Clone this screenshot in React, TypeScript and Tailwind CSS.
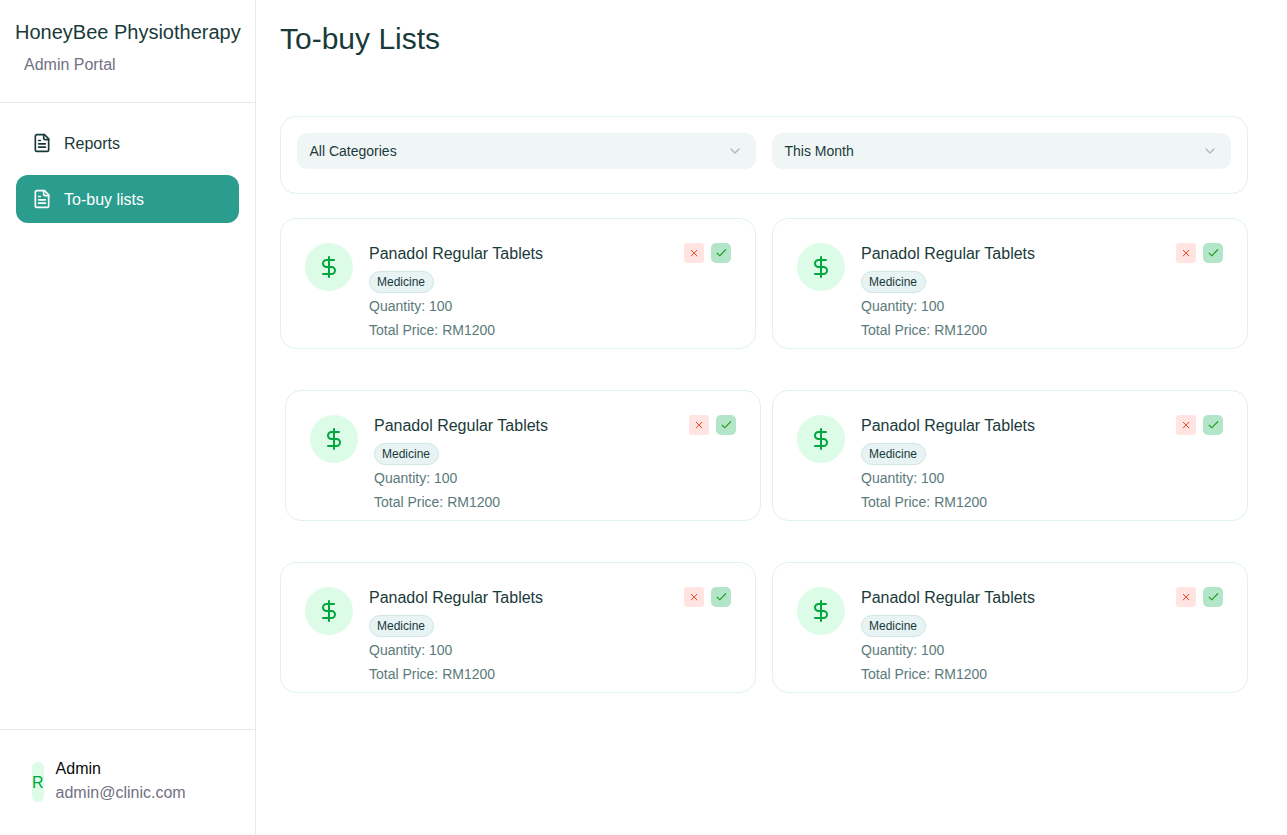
import React from "react";
import { ChevronDown, DollarSign } from "lucide-react";

function DocumentIcon() {
  return (
    <svg
      viewBox="0 0 24 24"
      className="size-5 shrink-0"
      fill="none"
      stroke="currentColor"
      strokeWidth="2"
      strokeLinecap="round"
      strokeLinejoin="round"
    >
      <path d="M15 2H6a2 2 0 0 0-2 2v16a2 2 0 0 0 2 2h12a2 2 0 0 0 2-2V7Z" />
      <path d="M14 2v4a2 2 0 0 0 2 2h4" />
      <path d="M10 9H8M16 13H8M16 17H8" />
    </svg>
  );
}

function NavItem({ label, active = false }: { label: string; active?: boolean }) {
  return (
    <a
      className={
        active
          ? "flex h-12 items-center gap-3 rounded-xl bg-[#2a9d8f] px-4 text-white"
          : "flex h-12 items-center gap-3 rounded-xl px-4 text-[#1a3a3a]"
      }
    >
      <DocumentIcon />
      <span className="pt-0.5">{label}</span>
    </a>
  );
}

function Sidebar() {
  return (
    <aside className="flex w-64 shrink-0 flex-col border-r border-[#e8e9eb]">
      <header className="h-[103px] border-b border-[#e8e9eb] pt-[18px]">
        <h1 className="pl-[15px] text-xl leading-7 whitespace-nowrap text-[#1a3a3a]">HoneyBee Physiotherapy</h1>
        <p className="mt-[7px] pl-6 leading-6 text-[#717182]">Admin Portal</p>
      </header>
      <nav className="flex flex-1 flex-col gap-2 p-4">
        <NavItem label="Reports" />
        <NavItem label="To-buy lists" active />
      </nav>
      <footer className="flex h-[106px] items-start gap-3 border-t border-[#e8e9eb] pt-[27px] pl-8">
        <div className="mt-[5px] flex h-10 items-center rounded-full bg-[#dcfce7] pt-0.5 text-[#00a63e]">R</div>
        <div className="leading-6">
          <p className="text-[#0a0a0a]">Admin</p>
          <p className="text-[#717182]">admin@clinic.com</p>
        </div>
      </footer>
    </aside>
  );
}

function Select({ value }: { value: string }) {
  return (
    <button className="flex h-9 flex-1 items-center justify-between rounded-[10px] bg-[#f0f6f6] pr-[13px] pl-[12.5px] text-sm text-[#1a3a3a]">
      <span className="pb-px">{value}</span>
      <ChevronDown className="size-4 text-[#a9bcbb]" strokeWidth={2} />
    </button>
  );
}

function ItemCard({ shifted = false }: { shifted?: boolean }) {
  return (
    <article
      className={
        shifted
          ? "ml-[5px] -mr-[5px] flex h-[131px] rounded-2xl border border-[#e0f2ef] pt-6 pr-6 pl-6"
          : "flex h-[131px] rounded-2xl border border-[#e0f2ef] pt-6 pr-6 pl-6"
      }
    >
      <div className="flex size-12 items-center justify-center rounded-full bg-[#dcfce7]">
        <DollarSign className="size-6 text-[#00a63e]" strokeWidth={2} />
      </div>
      <div className="-mt-px ml-4 flex flex-1 flex-col items-start">
        <h2 className="leading-6 text-[#1a3a3a]">Panadol Regular Tablets</h2>
        <span className="mt-[5px] flex h-[22px] w-[65px] items-center rounded-full border border-[#cfe6e4] bg-[#e8f4f4] pb-px pl-[7px] text-xs text-[#1a3a3a]">
          Medicine
        </span>
        <p className="mt-px text-sm leading-6 text-[#5a7a7a]">Quantity: 100</p>
        <p className="text-sm leading-6 text-[#5a7a7a]">Total Price: RM1200</p>
      </div>
      <div className="flex gap-[7px]">
        <button aria-label="Reject" className="size-5 rounded-[3px] bg-[#ffe4e1]">
          <svg viewBox="0 0 20 20" className="size-5" fill="none" stroke="#f04424" strokeWidth="1">
            <path d="M7 7l6.2 6.2M13.2 7L7 13.2" />
          </svg>
        </button>
        <button aria-label="Approve" className="size-5 rounded-[5px] bg-[#b3e6c8]">
          <svg viewBox="0 0 20 20" className="size-5" fill="none" stroke="#169310" strokeWidth="1.1">
            <path d="M5.8 9.8l3 3L15 6.4" />
          </svg>
        </button>
      </div>
    </article>
  );
}

export default function App() {
  return (
    <div className="flex h-screen min-h-[835px] bg-white font-['Liberation_Sans',Arial,sans-serif] text-base">
      <Sidebar />
      <main className="flex-1 pt-[21px] pr-[39px] pl-6">
        <h1 className="h-[95px] text-3xl leading-9 text-[#1a3a3a]">To-buy Lists</h1>
        <section className="mb-6 flex h-[78px] items-start gap-4 rounded-2xl border border-[#e0f2ef] p-4">
          <Select value="All Categories" />
          <Select value="This Month" />
        </section>
        <section className="grid grid-cols-2 gap-x-4 gap-y-[41px]">
          <ItemCard />
          <ItemCard />
          <ItemCard shifted />
          <ItemCard />
          <ItemCard />
          <ItemCard />
        </section>
      </main>
    </div>
  );
}
